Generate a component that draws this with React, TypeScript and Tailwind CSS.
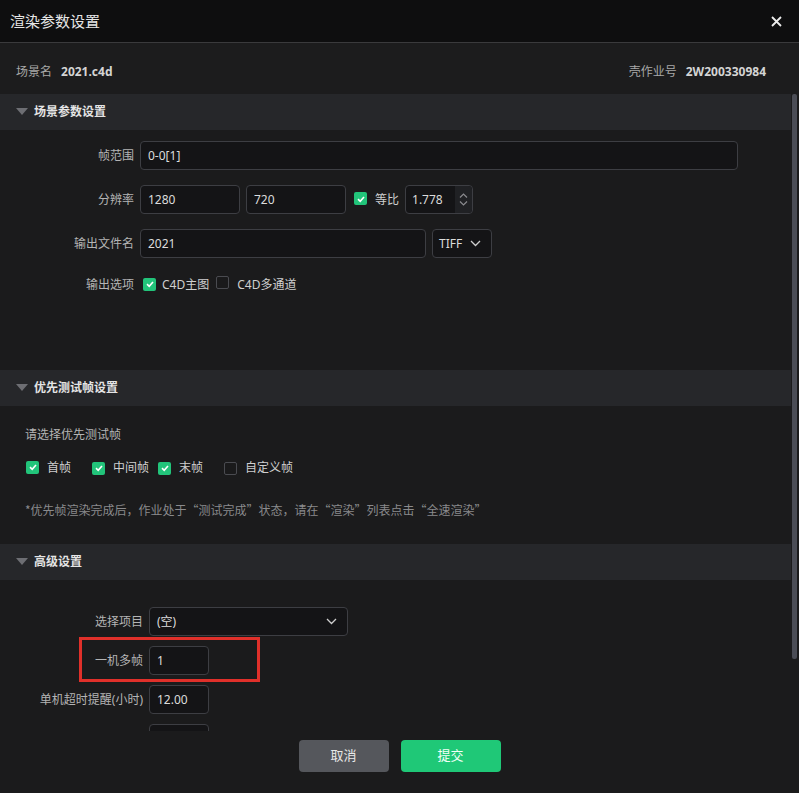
import React from "react";

const font = { fontFamily: '"Noto Sans", "Noto Sans CJK SC", sans-serif' };
const cjk = { fontFamily: '"Noto Sans CJK SC", "Noto Sans", sans-serif' };

function Check({ on }: { on: boolean }) {
  return on ? (
    <span className="inline-flex h-[13px] w-[13px] items-center justify-center rounded-[2px] bg-[#22c47a]">
      <svg width="10" height="10" viewBox="0 0 10 10">
        <path d="M2 5.2 L4.2 7.3 L8 2.9" fill="none" stroke="#ffffff" strokeWidth="1.6" />
      </svg>
    </span>
  ) : (
    <span className="inline-block h-[13px] w-[13px] rounded-[2px] border border-[#4a4b50] bg-[#1a1a1b]" />
  );
}

function Section({ title }: { title: string }) {
  return (
    <div className="flex h-[36px] items-center bg-[#26272a] pl-[16px]">
      <svg width="12" height="8" viewBox="0 0 12 8" className="mr-[6px]">
        <path d="M0 0 H12 L6 7 Z" fill="#6d6e73" />
      </svg>
      <span className="text-[12px] font-bold text-[#e4e4e4]">{title}</span>
    </div>
  );
}

function Input({ value, w }: { value: string; w: string }) {
  return (
    <div className={`flex h-[29px] items-center rounded-[4px] border border-[#3d3e43] bg-[#141416] px-[7px] text-[12px] text-[#dcdcdc] ${w}`}>
      {value}
    </div>
  );
}

function Chevron() {
  return (
    <svg width="11" height="7" viewBox="0 0 11 7">
      <path d="M1 1 L5.5 5.5 L10 1" fill="none" stroke="#cfcfcf" strokeWidth="1.3" />
    </svg>
  );
}

export default function App() {
  return (
    <div style={font} className="relative h-[793px] w-[799px] overflow-hidden bg-[#1b1b1c] text-[#c8c8c8]">
      {/* Title bar */}
      <div className="flex h-[43px] items-center justify-between border-b border-[#3a3a3c] bg-[#0e0e0f] pl-[10px] pr-[17px]">
        <span className="text-[15px] text-[#e6e6e6]">渲染参数设置</span>
        <svg width="11" height="11" viewBox="0 0 11 11">
          <path d="M1 1 L10 10 M10 1 L1 10" stroke="#ececec" strokeWidth="1.8" />
        </svg>
      </div>
      {/* Scene info */}
      <div className="flex h-[51px] items-center justify-between bg-[#1c1c1d] pl-[16px] pr-[33px] pt-[7px] text-[12px]">
        <div className="flex items-center gap-[9px]">
          <span className="text-[#a8a8a8]">场景名</span>
          <span className="font-bold text-[#d4d4d4]">2021.c4d</span>
        </div>
        <div className="flex items-center gap-[9px]">
          <span className="text-[#a8a8a8]">壳作业号</span>
          <span className="font-bold text-[#d4d4d4]">2W200330984</span>
        </div>
      </div>

      {/* Scroll area */}
      <div className="relative h-[637px] overflow-hidden pr-[8px]">
        <Section title="场景参数设置" />
        <div className="flex h-[240px] flex-col gap-[15px] pt-[11px] text-[12px]">
          <div className="flex items-center">
            <span className="w-[134px] text-right text-[#b4b4b4]">帧范围</span>
            <div className="ml-[6px]">
              <Input value="0-0[1]" w="w-[598px]" />
            </div>
          </div>
          <div className="flex items-center">
            <span className="w-[134px] text-right text-[#b4b4b4]">分辨率</span>
            <div className="ml-[6px] flex items-center gap-[6px]">
              <Input value="1280" w="w-[100px]" />
              <Input value="720" w="w-[100px]" />
              <span className="ml-[2px]"><Check on /></span>
              <span className="ml-[2px] text-[#cfcfcf]">等比</span>
              <div className="flex h-[29px] w-[68px] items-center justify-between rounded-[4px] border border-[#3d3e43] bg-[#141416] pl-[6px] text-[12px] text-[#dcdcdc]">
                <span>1.778</span>
                <div className="flex h-full w-[17px] flex-col items-center justify-center gap-[3px] rounded-r-[4px] bg-[#202124]">
                  <svg width="9" height="5" viewBox="0 0 9 5"><path d="M1 4.5 L4.5 1 L8 4.5" fill="none" stroke="#8a8a8e" strokeWidth="1.2" /></svg>
                  <svg width="9" height="5" viewBox="0 0 9 5"><path d="M1 0.5 L4.5 4 L8 0.5" fill="none" stroke="#8a8a8e" strokeWidth="1.2" /></svg>
                </div>
              </div>
            </div>
          </div>
          <div className="flex items-center">
            <span className="w-[134px] text-right text-[#b4b4b4]">输出文件名</span>
            <div className="ml-[6px] flex items-center gap-[6px]">
              <Input value="2021" w="w-[286px]" />
              <div className="flex h-[29px] w-[60px] items-center justify-between rounded-[4px] border border-[#3d3e43] bg-[#141416] pl-[6px] pr-[10px] text-[12px] text-[#dcdcdc]">
                <span>TIFF</span>
                <Chevron />
              </div>
            </div>
          </div>
          <div className="mt-[3px] flex items-center">
            <span className="w-[134px] text-right text-[#b4b4b4]">输出选项</span>
            <span className="ml-[9px]"><Check on /></span>
            <span className="ml-[6px] text-[#cfcfcf]">C4D主图</span>
            <span className="ml-[7px]"><Check on={false} /></span>
            <span className="ml-[8px] text-[#cfcfcf]">C4D多通道</span>
          </div>
        </div>

        <Section title="优先测试帧设置" />
        <div className="flex h-[138px] flex-col pl-[25px] pt-[20px] text-[12px]">
          <span className="text-[#b4b4b4]">请选择优先测试帧</span>
          <div className="mt-[15px] flex items-center">
            <span className="ml-[1px]"><Check on /></span>
            <span className="ml-[8px] w-[45px] text-[#cfcfcf]">首帧</span>
            <Check on />
            <span className="ml-[8px] w-[45px] text-[#cfcfcf]">中间帧</span>
            <Check on />
            <span className="ml-[8px] w-[45px] text-[#cfcfcf]">末帧</span>
            <Check on={false} />
            <span className="ml-[8px] text-[#cfcfcf]">自定义帧</span>
          </div>
          <span style={cjk} className="mt-[24px] text-[#8a8a8c]">*优先帧渲染完成后，作业处于“测试完成”状态，请在“渲染”列表点击“全速渲染”</span>
        </div>

        <Section title="高级设置" />
        <div className="flex flex-col gap-[10px] pt-[27px] text-[12px]">
          <div className="flex items-center">
            <span className="w-[143px] text-right text-[#b4b4b4]">选择项目</span>
            <div className="ml-[6px] flex h-[29px] w-[199px] items-center justify-between rounded-[4px] border border-[#3d3e43] bg-[#141416] pl-[7px] pr-[10px] text-[#dcdcdc]">
              <span>(空)</span>
              <Chevron />
            </div>
          </div>
          <div className="relative flex items-center">
            <span className="w-[143px] text-right text-[#b4b4b4]">一机多帧</span>
            <div className="ml-[6px]"><Input value="1" w="w-[60px]" /></div>
            <div className="pointer-events-none absolute left-[79px] top-[-9px] h-[45px] w-[181px] border-[3px] border-[#e0302a]" />
          </div>
          <div className="flex items-center">
            <span className="w-[143px] text-right text-[#b4b4b4]">单机超时提醒(小时)</span>
            <div className="ml-[6px]"><Input value="12.00" w="w-[60px]" /></div>
          </div>
          <div className="flex items-center">
            <span className="w-[143px]" />
            <div className="ml-[6px]"><Input value="" w="w-[60px]" /></div>
          </div>
        </div>

        {/* scrollbar thumb */}
        <div className="absolute right-[2px] top-0 h-[565px] w-[5px] rounded-[2px] bg-[#4b4d56]" />
      </div>

      {/* Footer */}
      <div className="flex h-[61px] items-start justify-center gap-[12px] pt-[9px]">
        <div className="flex h-[32px] w-[90px] items-center justify-center rounded-[4px] bg-[#55575c] text-[13px] text-[#e8e8e8]">取消</div>
        <div className="flex h-[32px] w-[100px] items-center justify-center rounded-[4px] bg-[#1fc877] text-[13px] text-[#f2fff8]">提交</div>
      </div>
    </div>
  );
}
